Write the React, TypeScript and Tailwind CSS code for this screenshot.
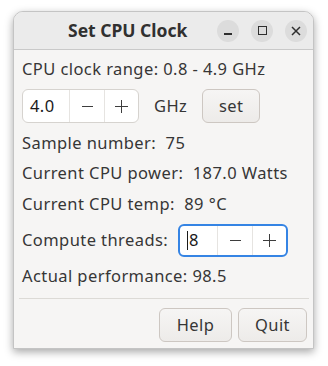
import { useState } from 'react';

function SpinButton({ value, focused, width }: { value: string; focused?: boolean; width: string }) {
  return (
    <div
      className={`flex h-full items-stretch rounded-[6px] bg-white ${width} ${
        focused ? 'border-2 border-[#3584e4]' : 'border border-[#d6d3cf]'
      }`}
    >
      <div className="flex flex-1 items-center pl-[7px] text-[#1a1a1a]">
        {focused && <span className="mr-[1px] inline-block h-[19px] w-[1px] bg-[#1a1a1a]" />}
        {value}
      </div>
      <button className="flex w-[35px] items-center justify-center border-l border-[#e6e4e1]">
        <span className="block h-[1px] w-[11px] bg-[#3d3d3d]" />
      </button>
      <button className="relative flex w-[34px] items-center justify-center border-l border-[#e6e4e1]">
        <span className="absolute block h-[1px] w-[13px] bg-[#3d3d3d]" />
        <span className="absolute block h-[13px] w-[1px] bg-[#3d3d3d]" />
      </button>
    </div>
  );
}

function Circle({ children }: { children: React.ReactNode }) {
  return (
    <div className="flex h-[22px] w-[22px] items-center justify-center rounded-full bg-[#dcdcdc]">
      {children}
    </div>
  );
}

const btn =
  'h-[34px] rounded-[6px] border border-[#cdc7c2] bg-gradient-to-b from-[#f6f5f4] to-[#edebe9] text-[#363636]';

export default function App() {
  const [clock] = useState('4.0');

  return (
    <div
      className="h-[366px] w-[328px] bg-white pl-[13px] pt-[11px] text-[16.5px] tracking-[0.42px] text-[#363636]"
      style={{ fontFamily: '"Noto Sans", "Open Sans", sans-serif' }}
    >
      <div className="flex h-[338px] w-[301px] flex-col overflow-hidden rounded-t-[10px] border border-[#c4c4c4] bg-[#f6f5f4] shadow-[0_3px_8px_rgba(0,0,0,0.35)]">
        {/* Title bar */}
        <div className="flex h-[38px] shrink-0 items-center border-b border-[#c9c9c9] bg-[#ebebeb] pr-[6px] tracking-normal">
          <div className="flex-1 pl-[54px] text-[17.5px] font-bold text-[#303030]">Set CPU Clock</div>
          <div className="flex items-center gap-[12px]">
            <Circle>
              <span className="mt-[7px] block h-[1.5px] w-[8px] bg-[#2e2e2e]" />
            </Circle>
            <Circle>
              <span className="block h-[9px] w-[9px] border-[1.5px] border-[#2e2e2e]" />
            </Circle>
            <Circle>
              <svg width="10" height="10" viewBox="0 0 10 10">
                <path d="M1 1 L9 9 M9 1 L1 9" stroke="#2e2e2e" strokeWidth="1.5" />
              </svg>
            </Circle>
          </div>
        </div>

        {/* Body */}
        <div className="flex flex-1 flex-col pl-[8px] pr-[6px] pt-[9px]">
          <div className="flex h-[20px] items-center">CPU clock range: 0.8 - 4.9 GHz</div>

          <div className="mt-[10px] flex h-[34px] items-center">
            <SpinButton value={clock} width="w-[117px]" />
            <span className="ml-[15px]">GHz</span>
            <button className={`${btn} ml-[15px] w-[58px]`}>set</button>
          </div>

          <div className="mt-[10px] flex h-[20px] items-center whitespace-pre">Sample number:  75</div>
          <div className="mt-[10px] flex h-[20px] items-center whitespace-pre">Current CPU power:  187.0 Watts</div>
          <div className="mt-[11px] flex h-[20px] items-center whitespace-pre">Current CPU temp:  89 °C</div>

          <div className="mt-[10px] flex h-[33px] items-center">
            <span>Compute threads:</span>
            <div className="ml-auto mr-[19px] h-[33px]">
              <SpinButton value="8" focused width="w-[110px]" />
            </div>
          </div>

          <div className="mt-[9px] flex h-[20px] items-center">Actual performance: 98.5</div>

          <div className="ml-[-3px] mr-[-2px] mt-[12px] h-[1px] bg-[#dcdad6]" />

          <div className="mt-[9px] flex justify-end gap-[6px]">
            <button className={`${btn} w-[73px]`}>Help</button>
            <button className={`${btn} w-[69px]`}>Quit</button>
          </div>
        </div>
      </div>
    </div>
  );
}
